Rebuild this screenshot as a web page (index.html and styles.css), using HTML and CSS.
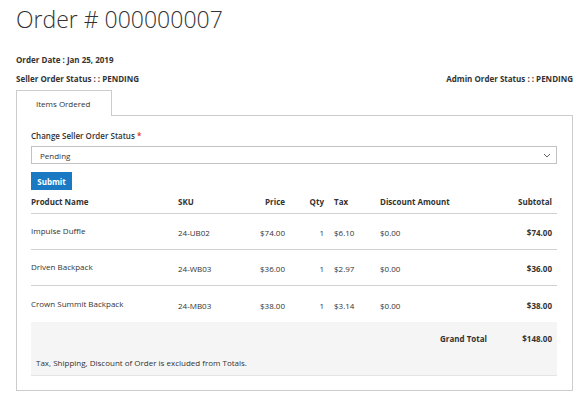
FILE: index.html
```html
<!DOCTYPE html>
<html lang="en">
    <head>
        <meta charset="UTF-8" />
        <title>Order # 000000007</title>
        <link rel="stylesheet" href="styles.css">
    </head>
    <body>
        <h1 class="page-title">Order # 000000007</h1>
        <div class="order-meta">Order Date : Jan 25, 2019</div>
        <div class="order-meta status-row">
            <span>Seller Order Status : : PENDING</span>
            <span>Admin Order Status : : PENDING</span>
        </div>

        <div class="tabs">
            <div class="tab active">Items Ordered</div>
        </div>
        <div class="tab-content">
            <label class="field-label" for="status">Change Seller Order Status <span class="required">*</span></label>
            <div class="select-wrap">
                <select id="status">
                    <option>Pending</option>
                    <option>Processing</option>
                    <option>Complete</option>
                </select>
                <svg class="chevron" width="8" height="5" viewBox="0 0 8 5">
                    <path d="M1 1 L4 4 L7 1" fill="none" stroke="#666" stroke-width="1"/>
                </svg>
            </div>
            <button class="btn-primary">Submit</button>

            <table class="items">
                <colgroup>
                    <col style="width:142px">
                    <col style="width:67px">
                    <col style="width:50px">
                    <col style="width:39px">
                    <col style="width:46px">
                    <col style="width:105px">
                    <col style="width:77px">
                </colgroup>
                <thead>
                    <tr>
                        <th>Product Name</th>
                        <th>SKU</th>
                        <th class="num">Price</th>
                        <th class="num">Qty</th>
                        <th>Tax</th>
                        <th>Discount Amount</th>
                        <th class="num">Subtotal</th>
                    </tr>
                </thead>
                <tbody>
                    <tr>
                        <td class="name">Impulse Duffle</td>
                        <td>24-UB02</td>
                        <td class="num">$74.00</td>
                        <td class="num">1</td>
                        <td>$6.10</td>
                        <td>$0.00</td>
                        <td class="num strong">$74.00</td>
                    </tr>
                    <tr>
                        <td class="name">Driven Backpack</td>
                        <td>24-WB03</td>
                        <td class="num">$36.00</td>
                        <td class="num">1</td>
                        <td>$2.97</td>
                        <td>$0.00</td>
                        <td class="num strong">$36.00</td>
                    </tr>
                    <tr>
                        <td class="name">Crown Summit Backpack</td>
                        <td>24-MB03</td>
                        <td class="num">$38.00</td>
                        <td class="num">1</td>
                        <td>$3.14</td>
                        <td>$0.00</td>
                        <td class="num strong">$38.00</td>
                    </tr>
                </tbody>
            </table>

            <div class="totals">
                <div class="grand-total">
                    <span class="label">Grand Total</span>
                    <span class="amount">$148.00</span>
                </div>
                <div class="note">Tax, Shipping, Discount of Order is excluded from Totals.</div>
            </div>
        </div>
    </body>
</html>
```

FILE: styles.css
```css
body {
    font-family: "Open Sans", "DejaVu Sans", sans-serif;
    font-size: 8px;
    color: #333333;
    background: #ffffff;
    margin: 0;
    padding: 0 14px 0 16px;
}
.page-title {
    font-size: 23px;
    font-weight: 300;
    line-height: 30px;
    margin: 4px 0 16px;
}
.order-meta {
    font-weight: bold;
    line-height: 19px;
}
.status-row {
    display: flex;
    justify-content: space-between;
}
.tabs {
    display: flex;
    margin-top: 2px;
}
.tab {
    width: 75px;
    height: 25px;
    line-height: 25px;
    padding-left: 19px;
    border: 1px solid #cccccc;
    border-bottom: none;
    background: #ffffff;
    margin-bottom: -1px;
    position: relative;
}
.tab-content {
    border: 1px solid #cccccc;
    padding: 14px 15px 14px 14px;
}
.field-label {
    display: block;
    font-weight: 600;
    line-height: 12px;
    margin-bottom: 4px;
}
.required {
    color: #e02b27;
}
.select-wrap {
    position: relative;
}
select {
    appearance: none;
    width: 100%;
    height: 18px;
    border: 1px solid #c2c2c2;
    background: #ffffff;
    font-family: inherit;
    font-size: 8px;
    color: #333333;
    padding: 0 8px;
    margin: 0;
    display: block;
}
.chevron {
    position: absolute;
    right: 6px;
    top: 7px;
    pointer-events: none;
}
.btn-primary {
    display: block;
    margin-top: 8px;
    height: 18px;
    width: 41px;
    padding: 0;
    background: #1979c3;
    border: 1px solid #1979c3;
    color: #ffffff;
    font-family: inherit;
    font-size: 8px;
    font-weight: bold;
}
.items {
    width: 100%;
    table-layout: fixed;
    border-collapse: collapse;
}
.items th {
    font-weight: bold;
    text-align: left;
    height: 23px;
    padding: 0 5px;
    border-bottom: 1px solid #d1d1d1;
}
.items td {
    height: 33px;
    padding: 2px 5px 0;
    border-bottom: 1px solid #d1d1d1;
}
.items tbody tr:last-child td {
    border-bottom: none;
    height: 34px;
}
.items th:first-child,
.items td:first-child {
    padding-left: 0;
}
.items td.name {
    padding-top: 0;
    padding-bottom: 2px;
}
.items .num {
    text-align: right;
}
.items .strong {
    font-weight: bold;
}
.totals {
    background: #f5f5f5;
    border-bottom: 1px solid #e4e4e4;
    padding: 11px 5px 6px;
}
.grand-total {
    display: flex;
    justify-content: flex-end;
    line-height: 12px;
    font-weight: bold;
}
.grand-total .amount {
    width: 65px;
    text-align: right;
}
.note {
    line-height: 12px;
    margin-top: 12px;
}
```
